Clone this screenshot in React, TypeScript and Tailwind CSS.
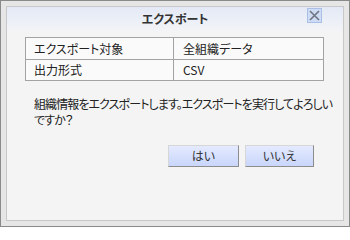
import React from 'react'

const font = "font-['Noto_Sans_CJK_JP','Liberation_Sans',sans-serif] [font-feature-settings:'palt']"

function CloseButton() {
  return (
    <button className="absolute right-[21px] top-[1px] flex h-[15px] w-[15px] items-center justify-center border border-[#a9bfe6] bg-[#cfdcf5]">
      <svg width="11" height="11" viewBox="0 0 11 11">
        <path d="M1 1 L10 10 M10 1 L1 10" stroke="#6f7682" strokeWidth="1.6" />
      </svg>
    </button>
  )
}

function DialogButton({ label, width }: { label: string; width: string }) {
  return (
    <button
      className={`${width} h-[22px] border border-[#d6d6d6] border-r-[#8d8d8d] border-b-[#8d8d8d] bg-gradient-to-b from-[#e4eaff] to-[#c9d6fb] text-[12px] text-[#333]`}
    >
      {label}
    </button>
  )
}

export default function App() {
  return (
    <div className={`${font} h-[227px] w-[350px] border border-[#8a8a8a] bg-[#e6e6e6] p-[5px] text-[#222]`}>
      <div className="flex h-full flex-col border border-[#c8c8c8] bg-[#f4f4f4]">
        {/* タイトルバー */}
        <div className="relative flex h-[24px] items-center justify-center bg-gradient-to-b from-[#e3e9f6] to-[#f3f4f7]">
          <span className="text-[12px] font-bold text-[#333]">エクスポート</span>
          <CloseButton />
        </div>

        {/* 内容テーブル */}
        <table className="mx-[18px] mt-[6px] w-[299px] border-collapse bg-[#fafafa] text-[12px]">
          <tbody>
            <tr className="h-[22px]">
              <td className="w-[148px] border border-[#a3a3a3] pl-[8px]">エクスポート対象</td>
              <td className="border border-[#a3a3a3] pl-[9px]">全組織データ</td>
            </tr>
            <tr className="h-[21px]">
              <td className="border border-[#a3a3a3] pl-[8px]">出力形式</td>
              <td className="border border-[#a3a3a3] pl-[9px]">CSV</td>
            </tr>
          </tbody>
        </table>

        {/* メッセージ */}
        <p className="mt-[15px] whitespace-nowrap pl-[27px] text-[12px] leading-[16px] tracking-[-0.9px]">
          組織情報をエクスポートします。エクスポートを実行してよろしい
          <br />
          ですか？
        </p>

        {/* ボタン */}
        <div className="mt-[17px] flex justify-end gap-[6px] pr-[29px]">
          <DialogButton label="はい" width="w-[71px]" />
          <DialogButton label="いいえ" width="w-[69px]" />
        </div>
      </div>
    </div>
  )
}
